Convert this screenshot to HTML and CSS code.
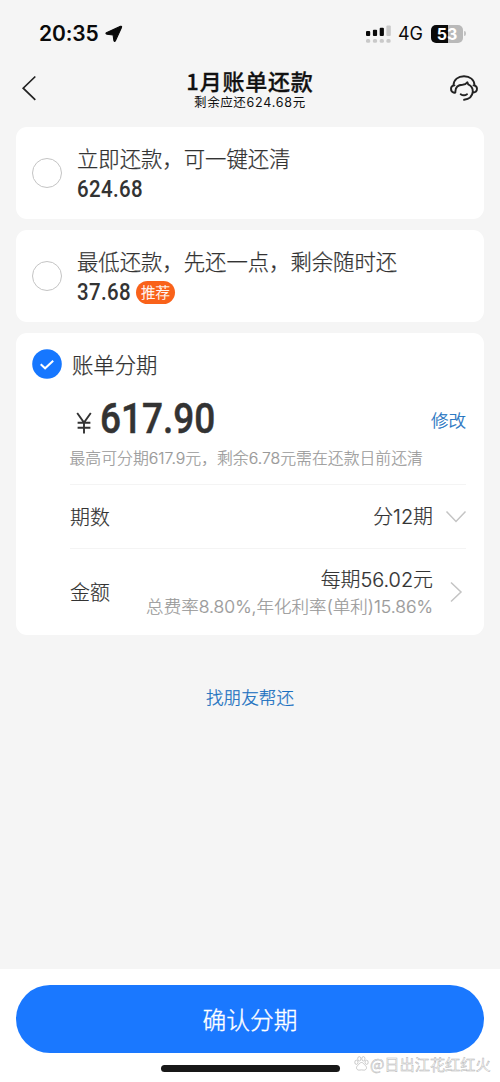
FILE: index.html
```html
<!DOCTYPE html>
<html lang="zh-CN">
<head>
<meta charset="utf-8">
<meta name="viewport" content="width=device-width, initial-scale=1">
<title>1月账单还款</title>
<link rel="stylesheet" href="styles.css">
</head>
<body>
<div class="screen">
  <div class="status">
    <span class="time">20:35</span>
    <svg class="arrow" width="18" height="18" viewBox="0 0 18 18"><path d="M1.4 7.700 15.500 1.300Q17.100.8 16.500 2.400L10.300 16Q9.400 17.200 8.900 15.600L8.100 10 2 9.200Q.2 8.600 1.400 7.700Z"/></svg>
    <svg class="signal" width="26" height="18" viewBox="0 0 26 18">
      <g fill="#0a0a0a"><rect x="0" y="6" width="4.2" height="5" rx="1"/><rect x="6.9" y="4.7" width="4.2" height="6.3" rx="1"/><rect x="13.7" y="2.8" width="4.2" height="8.2" rx="1"/></g>
      <g fill="#c9c9c9"><rect x="20.4" y=".4" width="4.4" height="10.6" rx="1"/><rect y="14" width="4.2" height="3.8" rx="1.5"/><rect x="6.9" y="14" width="4.2" height="3.8" rx="1.5"/><rect x="13.7" y="14" width="4.2" height="3.8" rx="1.5"/><rect x="20.4" y="14" width="4.2" height="3.8" rx="1.5"/></g>
    </svg>
    <span class="net">4G</span>
    <span class="battery">53</span><i class="tip"></i>
  </div>
  <header class="nav">
    <svg class="back" width="16" height="26" viewBox="0 0 16 26"><path d="M14.3 1.5 2.2 13.2 14.3 24.9"/></svg>
    <div class="heading">
      <h1>1月账单还款</h1>
      <p>剩余应还<span>624.68</span>元</p>
    </div>
    <svg class="service" width="28" height="26" viewBox="0 0 28 26"><path d="M3.4 10.600C3.600 4.500 8.200 1.200 14 1.200S24.400 4.500 24.600 10.600M4.500 10.400C2.200 10.500 1 11.600 1 13.800S2.100 17.400 4.200 17.800Q5.200 18 5.400 17.200V16.200C5.600 11.300 8.400 9.800 12.500 9.700Q15.900 9.500 17.300 7.200L18.200 9.400C21.900 11.100 22.900 13.200 22.800 16.700 22.300 21.500 19 24.400 14.100 24.800M23.500 10.400C25.800 10.500 27 11.600 27 13.800S25.900 17.400 22.800 17.700M10.700 19.200C12.500 20.500 15.200 20.500 17 19.200"/></svg>
  </header>
  <main>
    <section class="card option">
      <i class="radio"></i>
      <div><p class="label">立即还款，可一键还清</p><p class="sum"><b class="w1">624.68</b></p></div>
    </section>
    <section class="card option">
      <i class="radio"></i>
      <div><p class="label">最低还款，先还一点，剩余随时还</p><p class="sum"><b class="w2">37.68</b><em>推荐</em></p></div>
    </section>
    <section class="card plan">
      <div class="plan-head">
        <svg width="30" height="30" viewBox="0 0 30 30"><circle cx="15" cy="15" r="14.8" fill="#1677ff"/><path d="m8.700 15.200 4.400 4.100 8.100-7.600" fill="none" stroke="#fff" stroke-width="2"/></svg>
        <p class="label">账单分期</p>
      </div>
      <div class="amount">
        <svg class="yen" width="16" height="22" viewBox="0 0 16 22"><path d="m1.200 1 6.800 9.500L14.800 1M8 10v11.400M1.600 10.800h12.800M1.600 15.800h12.800"/></svg>
        <b>617.90</b><a>修改</a>
      </div>
      <p class="note">最高可分期<span>617.9</span>元，剩余<span>6.78</span>元需在还款日前还清</p>
      <div class="row term"><span class="name">期数</span><span class="value">分<i>12</i>期</span>
        <svg width="22" height="14" viewBox="0 0 22 14"><path d="m1.500 1.500 9.500 10 9.500-10"/></svg></div>
      <div class="row money"><span class="name">金额</span>
        <div class="detail"><p class="value">每期<i>56.02</i>元</p><p class="rate">总费率<i>8.80%,</i>年化利率<i>(</i>单利<i>)15.86%</i></p></div>
        <svg width="22" height="22" viewBox="0 0 22 22"><path d="m6 1.500 10 9.500-10 9.500"/></svg></div>
    </section>
    <a class="friend">找朋友帮还</a>
  </main>
  <footer>
    <button>确认分期</button>
    <i class="home"></i>
    <div class="watermark">
      <svg width="15" height="15" viewBox="0 0 15 15"><ellipse cx="2.4" cy="6.3" rx="1.6" ry="2.1"/><ellipse cx="5.3" cy="2.8" rx="1.6" ry="2.2"/><ellipse cx="9.4" cy="2.8" rx="1.6" ry="2.2"/><ellipse cx="12.6" cy="6.3" rx="1.6" ry="2.1"/><path d="M7.5 6.5c2 0 2.5 2 4 3.2 2.3 2.2.3 4.8-2 4.4q-2-.4-4 0c-2.3.4-4.3-2.2-2-4.4C5 8.500 5.500 6.500 7.500 6.500Z"/></svg>
      <span>@日出江花红红火</span>
    </div>
  </footer>
</div>
</body>
</html>
```
FILE: styles.css
```css
* { box-sizing: border-box; }
body, p, h1 { margin: 0; }
i, em { font-style: normal; }
body { background: #f5f5f5; color: #333; font-family: "Noto Sans CJK SC", sans-serif; }
.screen { width: 500px; height: 1082px; display: flex; flex-direction: column; overflow: hidden; position: relative; }
svg { flex: none; fill: none; }

.status { height: 60px; padding: 7px 0 0 39px; display: flex; align-items: center; color: #0a0a0a; font-family: Inter, sans-serif; }
.time { width: 60px; font-size: 21px; font-weight: 600; letter-spacing: -.1px; white-space: nowrap; }
.arrow { margin-left: 6px; fill: #0a0a0a; stroke: #0a0a0a; stroke-width: 1.1; stroke-linejoin: round; }
.signal { margin-left: 243px; }
.net { width: 32px; margin-left: 6px; font-size: 18px; letter-spacing: -.1px; }
.battery { width: 32px; height: 18px; margin-left: 1px; border-radius: 5px; background: linear-gradient(90deg, #0a0a0a 54%, #b9b9b9 54%); color: #fff; font-size: 16px; font-weight: 700; line-height: 18px; text-align: center; }
.tip { width: 2px; height: 5px; margin-left: 1px; border-radius: 0 2px 2px 0; background: #c2c2c2; }

.nav { height: 67px; padding: 0 22px 0 21px; display: flex; align-items: flex-start; justify-content: space-between; }
.back { margin-top: 15px; stroke: #222; stroke-width: 1.7; }
.service { margin-top: 15px; stroke: #222; stroke-width: 1.9; stroke-linecap: round; stroke-linejoin: round; }
.heading { padding: 5px 0 0 13px; color: #111; text-align: center; }
h1 { font-size: 22px; font-weight: 500; line-height: 30px; letter-spacing: .8px; -webkit-text-stroke: .3px #111; }
.heading p { margin-top: 1px; font-size: 12.500px; line-height: 12px; letter-spacing: .6px; }
.heading span { font-family: Inter, sans-serif; font-size: 12.500px; line-height: 12px; letter-spacing: .8px; }

main { flex: 1; padding: 0 16px; display: flex; flex-direction: column; gap: 11px; }
.card { background: #fff; border-radius: 11px; }
.option { height: 92px; padding: 15px 16px 0; display: flex; gap: 15px; }
.radio { width: 30px; height: 30px; margin-top: 16px; border: 1px solid #c4c4c4; border-radius: 50%; }
.label { font-size: 21.350px; font-weight: 300; line-height: 32px; -webkit-text-stroke: .25px; }
.sum { display: flex; align-items: center; height: 31px; }
.sum b { font: 500 23.500px/31px Roboto, sans-serif; transform: scaleX(.87); transform-origin: left; letter-spacing: .4px; }
.w1 { width: 66px; }
.w2 { width: 59px; }
.sum em { width: 39px; height: 23px; border-radius: 12px; background: #f9621a; color: #fff; font-size: 14.500px; font-weight: 300; line-height: 22px; text-align: center; -webkit-text-stroke: .25px; }

.plan { height: 302px; padding: 15px 18px 0 16px; }
.plan-head { height: 32px; display: flex; align-items: center; gap: 10px; }
.amount { height: 60px; margin-top: 9px; padding-left: 44px; display: flex; align-items: center; }
.yen { margin-top: 7px; stroke: #333; stroke-width: 1.9; }
.amount b { width: 131px; margin: 0 0 3px 8px; font: 500 43px/60px Roboto, sans-serif; transform: scaleX(.86); transform-origin: left; -webkit-text-stroke: .5px; }
.amount a { margin: 2px 0 0 auto; color: #1a70c0; font-size: 17.500px; font-weight: 300; line-height: 26px; -webkit-text-stroke: .25px; }
.note { height: 35px; padding-left: 37.500px; color: #999; font-size: 15.850px; font-weight: 300; line-height: 18px; white-space: nowrap; -webkit-text-stroke: .2px; }
.note span, .row i { font-family: Inter, sans-serif; }
.row { margin-left: 38px; display: flex; align-items: center; border-top: 1px solid #f4f4f4; font-weight: 300; -webkit-text-stroke: .2px; }
.row svg { margin-left: 12px; margin-right: -1px; stroke: #c4c4c4; stroke-width: 1.500; }
.term { height: 64px; }
.money { height: 87px; }
.name, .value { font-size: 19.900px; line-height: 28px; }
.name { margin-right: auto; }
.detail { text-align: right; }
.rate { color: #999; font-size: 17.550px; line-height: 24px; }
.friend { margin-top: 38px; align-self: center; color: #1a70c0; font-size: 17.600px; font-weight: 300; line-height: 26px; -webkit-text-stroke: .25px; }

footer { height: 113px; padding: 16px 16px 0; background: #fff; display: flex; flex-direction: column; align-items: center; }
button { flex: none; width: 468px; height: 68px; border: 0; border-radius: 34px; background: #1a78ff; color: #fff; font: 300 23.700px/68px "Noto Sans CJK SC", sans-serif; padding: 0; -webkit-text-stroke: .35px; }
.home { width: 179px; height: 7px; margin-top: 12px; border-radius: 4px; background: #181818; }
.watermark { position: absolute; left: 354px; bottom: 9px; display: flex; gap: 1px; align-items: center; color: #fff; font-size: 15.200px; line-height: 20px; -webkit-text-stroke: .5px #b4b4b4; white-space: nowrap; }
.watermark svg { stroke: #b4b4b4; stroke-width: .7; }
```
